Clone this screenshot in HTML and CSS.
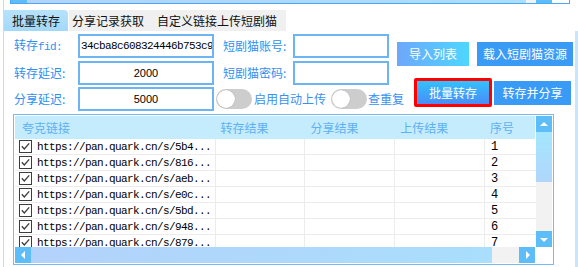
FILE: index.html
```html
<!DOCTYPE html>
<html lang="zh">
<head>
<meta charset="utf-8">
<title>批量转存</title>
<link rel="stylesheet" href="styles.css">
</head>
<body>
<div class="app">
  <div class="strip">
    <span class="sb-btn"></span><span class="sb-thumb"></span><span class="sb-track"></span><span class="sb-btn"></span><span class="sb-corner"></span>
  </div>
  <div class="tabs">
    <div class="tab active">批量转存</div>
    <div class="tab t2">分享记录获取</div>
    <div class="tab t3">自定义链接上传短剧猫</div>
  </div>
  <div class="panel">
    <div class="top">
      <div class="form">
        <div class="row r1">
          <span class="lbl">转存<span class="mono">fid:</span></span>
          <div class="inp inp-w mono-val">34cba8c608324446b753c9</div>
          <span class="lbl lbl2">短剧猫账号:</span>
          <div class="inp inp-s"></div>
        </div>
        <div class="row r2">
          <span class="lbl">转存延迟:</span>
          <div class="inp inp-w num">2000</div>
          <span class="lbl lbl2">短剧猫密码:</span>
          <div class="inp inp-s"></div>
        </div>
        <div class="row r3">
          <span class="lbl">分享延迟:</span>
          <div class="inp inp-w num">5000</div>
          <span class="toggle t-a"><span class="knob"></span></span>
          <span class="opt">启用自动上传</span>
          <span class="toggle t-b"><span class="knob"></span></span>
          <span class="opt o2">查重复</span>
        </div>
      </div>
      <div class="actions">
        <div class="arow">
          <button class="btn btn-grad">导入列表</button>
          <button class="btn btn-blue w96">载入短剧猫资源</button>
        </div>
        <div class="arow arow2">
          <div class="hl"><button class="btn btn-main">批量转存</button></div>
          <button class="btn btn-blue w77">转存并分享</button>
        </div>
      </div>
    </div>

    <div class="table">
      <div class="tmain">
        <div class="tleft">
          <div class="thead">
            <div class="c c1">夸克链接</div>
            <div class="c c2">转存结果</div>
            <div class="c c3">分享结果</div>
            <div class="c c4">上传结果</div>
            <div class="c c5">序号</div>
          </div>
          <div class="tbody">
            <div class="tr"><div class="c c1"><svg class="cb" width="13" height="13" viewBox="0 0 13 13"><rect x="0.5" y="0.5" width="12" height="12" fill="#fff" stroke="#3c3c3c"/><polyline points="2.8,6.3 5.3,9 10.2,3.4" fill="none" stroke="#3c3c3c" stroke-width="1.3"/></svg><span class="link">https://pan.quark.cn/s/5b4...</span></div><div class="c c2"></div><div class="c c3"></div><div class="c c4"></div><div class="c c5">1</div></div>
            <div class="tr"><div class="c c1"><svg class="cb" width="13" height="13" viewBox="0 0 13 13"><rect x="0.5" y="0.5" width="12" height="12" fill="#fff" stroke="#3c3c3c"/><polyline points="2.8,6.3 5.3,9 10.2,3.4" fill="none" stroke="#3c3c3c" stroke-width="1.3"/></svg><span class="link">https://pan.quark.cn/s/816...</span></div><div class="c c2"></div><div class="c c3"></div><div class="c c4"></div><div class="c c5">2</div></div>
            <div class="tr"><div class="c c1"><svg class="cb" width="13" height="13" viewBox="0 0 13 13"><rect x="0.5" y="0.5" width="12" height="12" fill="#fff" stroke="#3c3c3c"/><polyline points="2.8,6.3 5.3,9 10.2,3.4" fill="none" stroke="#3c3c3c" stroke-width="1.3"/></svg><span class="link">https://pan.quark.cn/s/aeb...</span></div><div class="c c2"></div><div class="c c3"></div><div class="c c4"></div><div class="c c5">3</div></div>
            <div class="tr"><div class="c c1"><svg class="cb" width="13" height="13" viewBox="0 0 13 13"><rect x="0.5" y="0.5" width="12" height="12" fill="#fff" stroke="#3c3c3c"/><polyline points="2.8,6.3 5.3,9 10.2,3.4" fill="none" stroke="#3c3c3c" stroke-width="1.3"/></svg><span class="link">https://pan.quark.cn/s/e0c...</span></div><div class="c c2"></div><div class="c c3"></div><div class="c c4"></div><div class="c c5">4</div></div>
            <div class="tr"><div class="c c1"><svg class="cb" width="13" height="13" viewBox="0 0 13 13"><rect x="0.5" y="0.5" width="12" height="12" fill="#fff" stroke="#3c3c3c"/><polyline points="2.8,6.3 5.3,9 10.2,3.4" fill="none" stroke="#3c3c3c" stroke-width="1.3"/></svg><span class="link">https://pan.quark.cn/s/5bd...</span></div><div class="c c2"></div><div class="c c3"></div><div class="c c4"></div><div class="c c5">5</div></div>
            <div class="tr"><div class="c c1"><svg class="cb" width="13" height="13" viewBox="0 0 13 13"><rect x="0.5" y="0.5" width="12" height="12" fill="#fff" stroke="#3c3c3c"/><polyline points="2.8,6.3 5.3,9 10.2,3.4" fill="none" stroke="#3c3c3c" stroke-width="1.3"/></svg><span class="link">https://pan.quark.cn/s/948...</span></div><div class="c c2"></div><div class="c c3"></div><div class="c c4"></div><div class="c c5">6</div></div>
            <div class="tr"><div class="c c1"><svg class="cb" width="13" height="13" viewBox="0 0 13 13"><rect x="0.5" y="0.5" width="12" height="12" fill="#fff" stroke="#3c3c3c"/><polyline points="2.8,6.3 5.3,9 10.2,3.4" fill="none" stroke="#3c3c3c" stroke-width="1.3"/></svg><span class="link">https://pan.quark.cn/s/879...</span></div><div class="c c2"></div><div class="c c3"></div><div class="c c4"></div><div class="c c5">7</div></div>
          </div>
        </div>
        <div class="vscroll">
          <div class="sbtn"><svg width="16" height="16" viewBox="0 0 16 16"><polygon points="4,10 12,10 8,6" fill="#fff"/></svg></div>
          <div class="vthumb"></div>
          <div class="vtrack"></div>
          <div class="sbtn"><svg width="16" height="16" viewBox="0 0 16 16"><polygon points="4,7 12,7 8,11" fill="#fff"/></svg></div>
        </div>
      </div>
      <div class="hscroll">
        <div class="sbtn"><svg width="16" height="16" viewBox="0 0 16 16"><polygon points="10,4 10,12 6,8" fill="#fff"/></svg></div>
        <div class="hthumb"></div>
        <div class="htrack"></div>
        <div class="sbtn"><svg width="16" height="16" viewBox="0 0 16 16"><polygon points="7,4 7,12 11,8" fill="#fff"/></svg></div>
        <div class="corner"></div>
      </div>
    </div>
  </div>
</div>
</body>
</html>
```
FILE: styles.css
```css
* { box-sizing: border-box; }
html, body { margin: 0; padding: 0; background: #fff; }
body {
  width: 578px;
  height: 267px;
  overflow: hidden;
  font-family: "Noto Sans CJK SC", "Noto Sans", sans-serif;
  font-size: 12px;
}

.app {
  margin-left: 3px;
  height: 267px;
  border-left: 1px solid #bcdff9;
  display: flex;
  flex-direction: column;
}

/* remnant scrollbar strip at top */
.strip {
  margin-left: 6px;
  width: 560px;
  height: 4px;
  border-left: 1px solid #4da6f2;
  border-right: 1px solid #4da6f2;
  border-bottom: 1px solid #4da6f2;
  display: flex;
}
.strip .sb-btn { width: 16px; background: #5cbdf8; }
.strip .sb-thumb { width: 499px; background: linear-gradient(90deg, #b3d3fb, #abdefc); }
.strip .sb-track { width: 10px; background: #f2f2f2; }
.strip .sb-corner { flex: 1; background: #fff; }

/* tabs */
.tabs {
  margin-top: 6px;
  height: 21px;
  display: flex;
}
.tab {
  height: 21px;
  line-height: 21px;
  color: #111;
  background: #f0f0f0;
  white-space: nowrap;
}
.tab.active {
  width: 64px;
  padding-left: 8px;
  background: linear-gradient(180deg, #b6e3fb, #a3d8fa);
  border-top-right-radius: 4px;
  margin-right: 1px;
}
.tab.t2 { width: 82px; padding-left: 3px; }
.tab.t3 { width: 135px; padding-left: 6px; }

/* panel */
.panel {
  flex: 1;
  border-right: 3px solid #c9e5fb;
  display: flex;
  flex-direction: column;
}

.top {
  display: flex;
  padding-top: 3px;
}
.form {
  width: 385px;
  flex: none;
  padding-left: 10px;
}
.row {
  display: flex;
  align-items: center;
  height: 24px;
  white-space: nowrap;
}
.row > * { flex: none; }
.r2 { margin-top: 3px; }
.r3 { margin-top: 2px; }

.lbl {
  width: 64px;
  color: #2f8ff0;
  font-size: 12px;
  line-height: 24px;
}
.lbl .mono {
  font-family: "Liberation Mono", monospace;
  font-size: 11px;
  letter-spacing: -0.6px;
}
.lbl2 { width: 70px; margin-left: 9px; }

.inp {
  height: 24px;
  border: 2px solid #6cb4f2;
  background: #fff;
  color: #000;
  line-height: 20px;
}
.inp-w { width: 136px; }
.inp-s { width: 96px; }
.mono-val {
  font-family: "Liberation Mono", monospace;
  font-size: 11px;
  letter-spacing: -0.6px;
  padding-left: 1px;
  overflow: hidden;
}
.num {
  font-family: "Liberation Sans", Arial, sans-serif;
  font-size: 11px;
  text-align: center;
}

.toggle {
  width: 36px;
  height: 20px;
  border-radius: 10px;
  background: #cdcdcd;
  display: flex;
  align-items: center;
  padding-left: 1px;
}
.toggle .knob {
  width: 18px;
  height: 18px;
  border-radius: 50%;
  background: #fff;
  box-shadow: 0 0 1px rgba(0,0,0,0.35);
}
.t-a { margin-left: 2px; }
.t-b { margin-left: 5px; }
.opt {
  color: #3a8ff0;
  margin-left: 2px;
  line-height: 20px;
}
.o2 { margin-left: 1px; }

/* action buttons */
.actions {
  margin-left: 8px;
  padding-top: 8px;
}
.arow {
  display: flex;
  align-items: center;
  gap: 8px;
}
.arow2 {
  margin-top: 12px;
  margin-left: 17px;
  gap: 2px;
}
.btn {
  border: 0;
  padding: 0;
  margin: 0;
  height: 24px;
  width: 72px;
  color: #fff;
  font-family: "Noto Sans CJK SC", "Noto Sans", sans-serif;
  font-size: 12px;
  line-height: 24px;
  text-align: center;
}
.btn-grad { background: linear-gradient(90deg, #6ea7fb, #4cd7ff); }
.btn-blue { background: #3a9bf6; }
.w96 { width: 96px; }
.w77 { width: 77px; }
.hl {
  width: 78px;
  height: 29px;
  border: 3px solid #ff0000;
  border-radius: 2px;
  display: flex;
}
.btn-main {
  width: 72px;
  height: 23px;
  background: linear-gradient(180deg, #32c2ff, #4a8cf6);
}

/* table */
.table {
  margin-top: 3px;
  margin-left: 9px;
  width: 541px;
  border: 1px solid #78b9f2;
  padding: 1px 2px 1px 1px;
}
.tmain { display: flex; }
.tleft { width: 521px; }
.thead {
  display: flex;
  height: 23px;
  background: #c5ecfc;
  color: #5eb0f4;
  line-height: 23px;
  border-right: 1px solid #fff;
}
.thead .c { padding-left: 6px; }
.thead .c1 { padding-left: 7px; }
.thead .c2 { padding-left: 5px; }
.c1 { width: 201px; }
.c2 { width: 89px; }
.c3 { width: 90px; }
.c4 { width: 90px; }
.c5 { width: 51px; }

.tbody {
  height: 108px;
  overflow: hidden;
}
.tr {
  display: flex;
  height: 16px;
}
.tr .c {
  height: 16px;
  border-bottom: 1px solid #ececec;
  border-right: 1px solid #ececec;
  display: flex;
  align-items: center;
}
.tr .c5 {
  border-right: 0;
  padding-left: 6px;
  font-family: "Liberation Mono", monospace;
  font-size: 12px;
  color: #000;
}
.cb { margin-left: 4px; flex: none; }
.link {
  margin-left: 5px;
  font-family: "Liberation Mono", monospace;
  font-size: 11px;
  letter-spacing: -0.6px;
  color: #000;
  white-space: nowrap;
}

.vscroll {
  width: 16px;
  height: 131px;
  display: flex;
  flex-direction: column;
}
.sbtn {
  width: 16px;
  height: 16px;
  background: #5cbdf8;
  flex: none;
}
.sbtn svg { display: block; }
.vthumb { height: 50px; background: linear-gradient(180deg, #a4e6fd, #b0d6fb); }
.vtrack { height: 49px; background: #f2f2f2; }

.hscroll {
  display: flex;
  height: 16px;
}
.hthumb { width: 462px; background: linear-gradient(90deg, #b3d2fb, #a9defc); }
.htrack { width: 27px; background: #f2f2f2; }
.corner { width: 16px; background: #fff; }
```
